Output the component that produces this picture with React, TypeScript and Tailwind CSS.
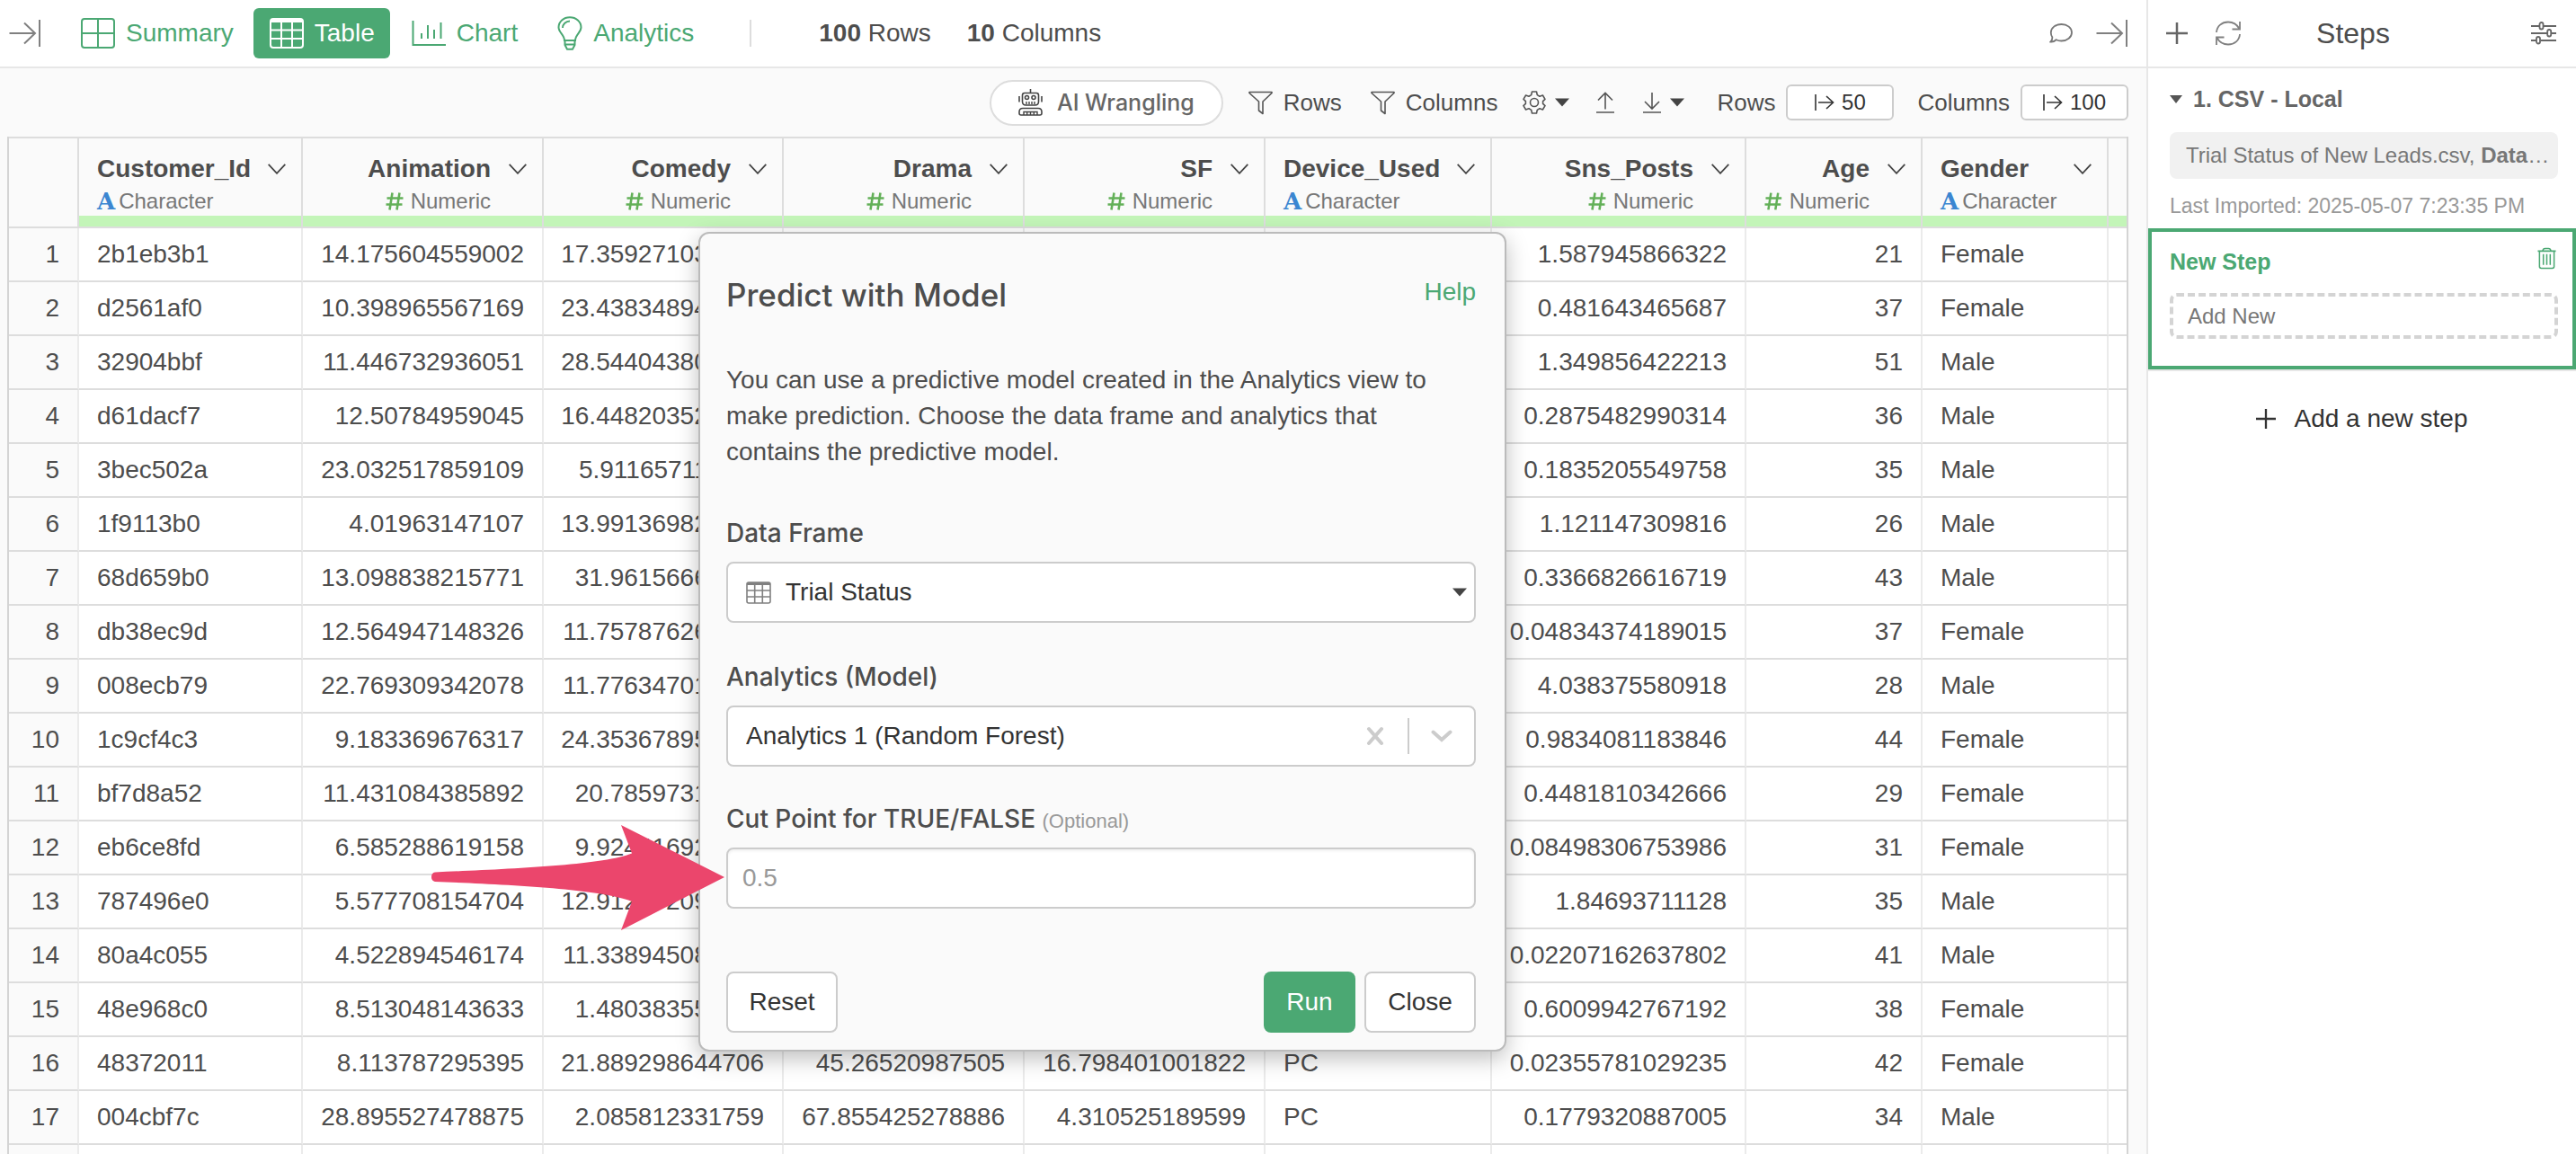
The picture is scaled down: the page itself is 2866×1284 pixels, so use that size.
import React from "react";

const F = "font-['Liberation_Sans',Arial,sans-serif]";

type Col = { name: string; kind: "num" | "chr"; w: string };

const cols: Col[] = [
  { name: "Customer_Id", kind: "chr", w: "w-[249px]" },
  { name: "Animation", kind: "num", w: "w-[268px]" },
  { name: "Comedy", kind: "num", w: "w-[267px]" },
  { name: "Drama", kind: "num", w: "w-[268px]" },
  { name: "SF", kind: "num", w: "w-[268px]" },
  { name: "Device_Used", kind: "chr", w: "w-[252px]" },
  { name: "Sns_Posts", kind: "num", w: "w-[283px]" },
  { name: "Age", kind: "num", w: "w-[196px]" },
  { name: "Gender", kind: "chr", w: "w-[207px]" },
];

const rows: string[][] = [
  ["2b1eb3b1", "14.175604559002", "17.359271030000", "", "", "", "1.587945866322", "21", "Female"],
  ["d2561af0", "10.398965567169", "23.438348940000", "", "", "", "0.481643465687", "37", "Female"],
  ["32904bbf", "11.446732936051", "28.544043800000", "", "", "", "1.349856422213", "51", "Male"],
  ["d61dacf7", "12.50784959045", "16.448203520000", "", "", "", "0.2875482990314", "36", "Male"],
  ["3bec502a", "23.032517859109", "5.911657110000", "", "", "", "0.1835205549758", "35", "Male"],
  ["1f9113b0", "4.01963147107", "13.991369820000", "", "", "", "1.121147309816", "26", "Male"],
  ["68d659b0", "13.098838215771", "31.96156660000", "", "", "", "0.3366826616719", "43", "Male"],
  ["db38ec9d", "12.564947148326", "11.757876260000", "", "", "", "0.04834374189015", "37", "Female"],
  ["008ecb79", "22.769309342078", "11.776347010000", "", "", "", "4.038375580918", "28", "Male"],
  ["1c9cf4c3", "9.183369676317", "24.353678950000", "", "", "", "0.9834081183846", "44", "Female"],
  ["bf7d8a52", "11.431084385892", "20.78597310000", "", "", "", "0.4481810342666", "29", "Female"],
  ["eb6ce8fd", "6.585288619158", "9.924416920000", "", "", "", "0.08498306753986", "31", "Female"],
  ["787496e0", "5.577708154704", "12.912772090000", "", "", "", "1.84693711128", "35", "Male"],
  ["80a4c055", "4.522894546174", "11.338945080000", "", "", "", "0.02207162637802", "41", "Male"],
  ["48e968c0", "8.513048143633", "1.480383550000", "", "", "", "0.6009942767192", "38", "Female"],
  ["48372011", "8.113787295395", "21.889298644706", "45.26520987505", "16.798401001822", "PC", "0.02355781029235", "42", "Female"],
  ["004cbf7c", "28.895527478875", "2.085812331759", "67.855425278886", "4.310525189599", "PC", "0.1779320887005", "34", "Male"],
  ["", "", "", "", "", "", "", "", ""],
];

const CollapseIcon = () => (
  <svg width="36" height="32" viewBox="0 0 36 32" fill="none" stroke="#808080" strokeWidth="2">
    <path d="M0.5 16H29M17 4.5L29 16L17 27.5M34 1V31" />
  </svg>
);

const SummaryIcon = () => (
  <svg width="38" height="34" viewBox="0 0 38 34" fill="none" stroke="#4ba873" strokeWidth="2">
    <rect x="1" y="1" width="36" height="32" rx="3" />
    <path d="M19 1V33M1 17H37" />
  </svg>
);

const TableIcon = () => (
  <svg width="38" height="34" viewBox="0 0 38 34" fill="none" stroke="#fff" strokeWidth="2">
    <rect x="1" y="1" width="36" height="32" rx="3" />
    <path d="M2 3H36" strokeWidth="4" />
    <path d="M13 3V33M25 3V33M1 13.5H37M1 23H37" />
  </svg>
);

const ChartIcon = () => (
  <svg width="38" height="30" viewBox="0 0 38 30" fill="none" stroke="#4ba873" strokeWidth="2">
    <path d="M1.5 1V28H38M11 21V15M18 21V6M25 21V11M32.5 21V3" />
  </svg>
);

const BulbIcon = () => (
  <svg width="28" height="38" viewBox="0 0 28 38" fill="none" stroke="#4ba873" strokeWidth="2">
    <path d="M8 27C8 21 1.500 18 1.500 12.500C1.500 6 7 1.200 14 1.200S26.500 6 26.500 12.500C26.500 18 20 21 20 27Z" />
    <path d="M8.500 27V32L11 36.800H17L19.500 32V27M8.500 31.500H19.500M6 13C6 9 9.500 5.500 14 5.500" />
  </svg>
);

const FunnelIcon = () => (
  <svg width="27" height="27" viewBox="0 0 27 27" fill="none" stroke="#555" strokeWidth="1.600" strokeLinejoin="round">
    <path d="M1 1.500H26V2.500L16 12V25.500L11.500 22V12L1 2.500Z" />
  </svg>
);

const GearIcon = () => (
  <svg width="26" height="26" viewBox="0 0 26 26" fill="none" stroke="#555" strokeWidth="1.600" strokeLinejoin="round">
    <path d="M10.500 1H15.500L16.300 4.600L19 6.200L22.400 5L25 9.300L22.600 11.600V14.400L25 16.700L22.400 21L19 19.800L16.300 21.400L15.500 25H10.500L9.700 21.400L7 19.800L3.600 21L1 16.700L3.400 14.400V11.600L1 9.300L3.600 5L7 6.200L9.700 4.600Z" />
    <circle cx="13" cy="13" r="4.500" />
  </svg>
);

const Caret = () => (
  <svg width="16" height="10" viewBox="0 0 16 10" fill="#444">
    <path d="M0 0.500H16L8 9.500Z" />
  </svg>
);

const UploadIcon = () => (
  <svg width="20" height="24" viewBox="0 0 20 24" fill="none" stroke="#555" strokeWidth="1.600">
    <path d="M10 19.500V1.500M2 9.500L10 1.500L18 9.500M0 23H20" />
  </svg>
);

const DownloadIcon = () => (
  <svg width="20" height="24" viewBox="0 0 20 24" fill="none" stroke="#555" strokeWidth="1.600">
    <path d="M10 1V19M2 11L10 19L18 11M0 23H20" />
  </svg>
);

const FromIcon = () => (
  <svg width="22" height="18" viewBox="0 0 22 18" fill="none" stroke="#333" strokeWidth="1.600">
    <path d="M1 0V18M4 9H20.500M13 2L20.500 9L13 16" />
  </svg>
);

const RobotIcon = () => (
  <svg width="27" height="30" viewBox="0 0 27 30" fill="none" stroke="#444" strokeWidth="1.600">
    <path d="M13.500 0V4M1 8V14.500M26 8V14.500M7 4.500H20Q22.500 4.500 22.500 7V14Q22.500 18 18.500 18H8.500Q4.500 18 4.500 14V7Q4.500 4.500 7 4.500Z" />
    <circle cx="9.500" cy="9.500" r="2" />
    <circle cx="17" cy="9.500" r="2" />
    <path d="M9 17V14M12 17V14M15 17V14M18 17V14" strokeWidth="1.400" />
    <path d="M5 21.500H22Q26 21.500 26 25.500V27Q26 29 24 29H3Q1 29 1 27V25.500Q1 21.500 5 21.500Z" />
    <path d="M6 29V25.500H21V29M9.700 25.500V29M13.500 25.500V29M17.300 25.500V29" strokeWidth="1.400" />
  </svg>
);

const ChevronIcon = () => (
  <svg width="20" height="12" viewBox="0 0 20 12" fill="none" stroke="#444" strokeWidth="1.800">
    <path d="M0.700 0.800L10 10.800L19.300 0.800" />
  </svg>
);

const CommentIcon = () => (
  <svg width="26" height="22" viewBox="0 0 26 22" fill="none" stroke="#777" strokeWidth="1.800">
    <path d="M13.500 1C20 1 25 5 25 10.200S20 19.500 13.500 19.500C11.300 19.500 9.400 19 7.700 18.200C6 20 3.800 20.700 1.500 20.500C3 19 3.500 17.500 3.300 15.200C2.200 13.800 1.800 12 1.800 10.200C1.800 5 7 1 13.500 1Z" />
  </svg>
);

const RefreshIcon = () => (
  <svg width="30" height="28" viewBox="0 0 30 28" fill="none" stroke="#808080" strokeWidth="1.800">
    <path d="M2 13C2.500 6 8 1.500 15 1.500C20.500 1.500 25 4.500 27.500 9M28 1V9.500H19.500M28 15C27.500 22 22 26.500 15 26.500C9.500 26.500 5 23.500 2.500 19M2 27V18.500H10.500" />
  </svg>
);

const SlidersIcon = () => (
  <svg width="28" height="26" viewBox="0 0 28 26" fill="none" stroke="#666" strokeWidth="1.800">
    <path d="M0 5H9.500M14 5H28M0 13H18M22.500 13H28M0 21H6M10.500 21H28" />
    <rect x="9.500" y="1" width="4" height="7.500" rx="2" />
    <rect x="18.200" y="9" width="4" height="7.500" rx="2" />
    <rect x="6" y="17" width="4" height="7.500" rx="2" />
  </svg>
);

const TrashIcon = () => (
  <svg width="21" height="25" viewBox="0 0 22 25" fill="none" stroke="#4ba873" strokeWidth="1.600">
    <path d="M0.500 4H21.500M6 4C6.500 2 8 1 9 1H13C14 1 15.500 2 16 4M2.500 4V22Q2.500 24 4.500 24H17.500Q19.500 24 19.500 22V4M7 7.500V20M11 7.500V20M15 7.500V20" />
  </svg>
);

const PlusIcon = ({ size, color }: { size: number; color: string }) => (
  <svg width={size} height={size} viewBox="0 0 24 24" fill="none" stroke={color} strokeWidth="2.500">
    <path d="M12 0V24M0 12H24" />
  </svg>
);

const GridIcon = () => (
  <svg width="28" height="25" viewBox="0 0 28 25" fill="none" stroke="#808080" strokeWidth="1.600">
    <rect x="1" y="1" width="26" height="23" rx="2" />
    <path d="M1 2.500H27" strokeWidth="3" />
    <path d="M9.700 3V24M18.300 3V24M1 10H27M1 17H27" />
  </svg>
);

const LetterMark = () => <b className="font-['DejaVu_Serif',serif] text-[26px] leading-6 text-[#3b86d1]">A</b>;
const HashMark = () => (
  <svg width="20" height="20" viewBox="0 0 20 20" fill="none" stroke="#63b058" strokeWidth="2.600">
    <path d="M7.500 0.500L4.500 19.500M15.500 0.500L12.500 19.500M1.500 6.500H19.500M0.500 13.500H18.500" />
  </svg>
);

function TopBar() {
  return (
    <header className="flex h-[76px] shrink-0 items-center border-b-2 border-[#e7e7e7] bg-white pr-5 pl-2.5 text-[28px] leading-8 text-[#4ba873]">
      <button aria-label="Expand left panel"><CollapseIcon /></button>
      <nav className="ml-[26px] flex items-center">
        <button className="flex h-14 items-center gap-3 px-[18px]"><SummaryIcon />Summary</button>
        <button className="ml-1 flex h-14 items-center gap-3 rounded-md bg-[#4ba873] pr-[17px] pl-[18px] text-white"><TableIcon />Table</button>
        <button className="ml-1.5 flex h-14 items-center gap-3 px-[18px]"><ChartIcon />Chart</button>
        <button className="ml-2 flex h-14 items-center gap-3 px-[18px]"><BulbIcon />Analytics</button>
      </nav>
      <div className="ml-11 h-[30px] w-0.5 bg-[#ddd]" />
      <p className="ml-[75px] text-[#4d4d4d]"><b>100</b> Rows</p>
      <p className="ml-10 text-[#4d4d4d]"><b>10</b> Columns</p>
      <div className="ml-auto flex items-center gap-[26px]">
        <button aria-label="Comments"><CommentIcon /></button>
        <button aria-label="Collapse steps"><CollapseIcon /></button>
      </div>
    </header>
  );
}

function ToolBar() {
  return (
    <div className="flex h-[76px] shrink-0 items-center justify-end pr-5 text-[26px] leading-8 text-[#4d4d4d]">
      <button className="flex h-[51px] items-center gap-4 rounded-full border-2 border-[#ddd] bg-white px-[30px] font-['Inter',sans-serif] text-[25px] font-medium text-[#666]">
        <RobotIcon />AI Wrangling
      </button>
      <button className="ml-7 flex items-center gap-3"><FunnelIcon />Rows</button>
      <button className="ml-8 flex items-center gap-3"><FunnelIcon />Columns</button>
      <button className="ml-7 flex items-center gap-2.5" aria-label="Settings"><GearIcon /><Caret /></button>
      <button className="ml-[30px]" aria-label="Export"><UploadIcon /></button>
      <button className="ml-8 flex items-center gap-2.5" aria-label="Download"><DownloadIcon /><Caret /></button>
      <span className="ml-9">Rows</span>
      <button className="ml-3 flex h-10 w-[120px] items-center justify-center gap-2 rounded-md border-2 border-[#ccc] bg-white text-2xl text-[#333]"><FromIcon />50</button>
      <span className="ml-[26px]">Columns</span>
      <button className="ml-3 flex h-10 w-[120px] items-center justify-center gap-2 rounded-md border-2 border-[#ccc] bg-white text-2xl text-[#333]"><FromIcon />100</button>
    </div>
  );
}

function HeadCell({ col }: { col: Col }) {
  const num = col.kind === "num";
  return (
    <th className="h-[102px] border-t-2 border-r-2 border-b-2 border-[#ddd] p-0 align-top font-normal">
      <div className="flex h-[98px] flex-col border-b-[12px] border-[#c3f5b8] pt-[18px] pr-[17px] pl-5">
        <div className={num ? "flex items-center justify-end gap-5" : "flex items-center justify-between"}>
          <b>{col.name}</b>
          <button aria-label={"Menu for " + col.name}><ChevronIcon /></button>
        </div>
        <div className={num ? "mt-1 flex items-center justify-end gap-2 pr-10 text-2xl text-[#777]" : "mt-1 flex h-8 items-center gap-1 text-2xl text-[#777]"}>
          {num ? <HashMark /> : <LetterMark />}
          {num ? "Numeric" : "Character"}
        </div>
      </div>
    </th>
  );
}

function DataTable() {
  return (
    <div className="min-h-0 flex-1 overflow-hidden pr-5 pl-2">
      <table className="w-full table-fixed border-separate border-spacing-0 border-r-2 border-l-2 border-[#d4d4d4] text-[28px] leading-8 text-[#4d4d4d]">
        <colgroup>
          <col className="w-[78px]" />
          {cols.map((c) => <col key={c.name} className={c.w} />)}
          <col />
        </colgroup>
        <thead>
          <tr>
            <th className="border-t-2 border-r-2 border-b-2 border-[#ddd]" />
            {cols.map((c) => <HeadCell key={c.name} col={c} />)}
            <th className="border-t-2 border-b-2 border-[#ddd] p-0 align-bottom"><div className="h-3 bg-[#c3f5b8]" /></th>
          </tr>
        </thead>
        <tbody>
          {rows.map((r, i) => (
            <tr key={i}>
              <td className="h-[60px] border-r-2 border-b-2 border-r-[#ebebeb] border-b-[#ddd] bg-[#fafafa] pr-5 text-right">{r[0] && i + 1}</td>
              {r.map((v, j) => (
                <td
                  key={j}
                  className={
                    cols[j].kind === "num"
                      ? "border-r-2 border-b-2 border-r-[#ebebeb] border-b-[#ddd] bg-white pr-5 text-right whitespace-nowrap"
                      : "border-r-2 border-b-2 border-r-[#ebebeb] border-b-[#ddd] bg-white pl-5"
                  }
                >
                  {v}
                </td>
              ))}
              <td className="border-b-2 border-[#ddd] bg-white" />
            </tr>
          ))}
        </tbody>
      </table>
    </div>
  );
}

function StepsPanel() {
  return (
    <aside className="w-[478px] shrink-0 border-l-2 border-[#e7e7e7] bg-white text-2xl text-[#777]">
      <div className="flex h-[76px] items-center border-b-2 border-[#e7e7e7] pr-[22px] pl-5">
        <button aria-label="Add step"><PlusIcon size={24} color="#666" /></button>
        <button className="ml-[30px]" aria-label="Refresh"><RefreshIcon /></button>
        <h2 className="flex-1 pr-[74px] text-center text-[32px] leading-10 text-[#4d4d4d]">Steps</h2>
        <button aria-label="Step options"><SlidersIcon /></button>
      </div>
      <section className="pr-5 pl-6">
        <h3 className="flex items-center gap-3 pt-[18px] text-[25px] leading-8 font-bold text-[#666]"><svg width="14" height="9" viewBox="0 0 14 9" fill="#555"><path d="M0 0H14L7 9Z" /></svg>1. CSV - Local</h3>
        <p className="mt-[21px] h-[52px] truncate rounded-lg bg-[#f1f1f1] pr-2 pl-[18px] leading-[52px]">Trial Status of New Leads.csv, <b>Data Frame</b></p>
        <p className="mt-3.5 text-[23px] leading-8 text-[#999]">Last Imported: 2025-05-07 7:23:35 PM</p>
      </section>
      <section className="mt-[9px] h-[157px] border-4 border-[#4ba873] pt-[17px] pr-4 pl-5">
        <h3 className="flex items-start justify-between text-[25px] leading-8 font-bold text-[#4ba873]">New Step<button className="mr-0.5" aria-label="Delete step"><TrashIcon /></button></h3>
        <button className="mt-[19px] block h-[51px] w-full rounded-lg border-4 border-dashed border-[#d4d4d4] pl-4 text-left">Add New</button>
      </section>
      <button className="flex w-full items-center justify-center gap-5 border-t-2 border-[#e7e7e7] pt-[35px] text-[28px] leading-9 text-[#333]"><PlusIcon size={22} color="#333" />Add a new step</button>
    </aside>
  );
}

function PredictDialog() {
  return (
    <div role="dialog" aria-label="Predict with Model" className="absolute top-[258px] left-[777px] w-[899px] rounded-xl border-2 border-[#bbb] bg-[#fafafa] pt-[46px] pr-8 pb-[19px] pl-[29px] text-[28px] leading-8 text-[#4d4d4d] shadow-[0_8px_24px_rgba(0,0,0,0.25)]">
      <div className="flex items-start justify-between">
        <h1 className="font-['Inter',sans-serif] text-[35px] leading-[44px] font-medium">Predict with Model</h1>
        <a href="#help" className="pt-[3px] text-[#4ba873]">Help</a>
      </div>
      <p className="mt-[53px] max-w-[810px] leading-10">You can use a predictive model created in the Analytics view to make prediction. Choose the data frame and analytics that contains the predictive model.</p>
      <label htmlFor="frame" className="mt-[54px] block h-8 font-['Inter',sans-serif] font-medium">Data Frame</label>
      <div className="relative mt-4 flex items-center">
        <select id="frame" className="h-[68px] w-full appearance-none rounded-lg border-2 border-[#ccc] bg-white pl-[64px] text-[#333]"><option>Trial Status</option></select>
        <span className="pointer-events-none absolute left-[22px]"><GridIcon /></span>
        <span className="pointer-events-none absolute right-2.5"><Caret /></span>
      </div>
      <label htmlFor="model" className="mt-11 block h-8 font-['Inter',sans-serif] font-medium">Analytics (Model)</label>
      <div className="relative mt-4 flex items-center">
        <select id="model" className="h-[68px] w-full appearance-none rounded-lg border-2 border-[#ccc] bg-white pl-5 text-[#333]"><option>Analytics 1 (Random Forest)</option></select>
        <span className="absolute right-[26px] flex items-center gap-6">
          <button className="mr-0.5" aria-label="Clear"><svg width="20" height="22" viewBox="0 0 20 22" fill="none" stroke="#ccc" strokeWidth="4" strokeLinecap="round"><path d="M3 3L17 19M17 3L3 19" /></svg></button>
          <span className="h-10 w-0.5 bg-[#ccc]" />
          <svg width="24" height="14" viewBox="0 0 24 14" fill="none" stroke="#ccc" strokeWidth="4" strokeLinecap="round"><path d="M2.500 2.500L12 11L21.500 2.500" /></svg>
        </span>
      </div>
      <label htmlFor="cut" className="mt-[42px] block h-8 font-['Inter',sans-serif] font-medium">Cut Point for TRUE/FALSE <span className="font-['Liberation_Sans',Arial,sans-serif] text-[22px] font-normal text-[#999]">(Optional)</span></label>
      <input id="cut" placeholder="0.5" className="mt-4 block h-[68px] w-full rounded-lg border-2 border-[#ccc] bg-white px-4 inset-shadow-[0_2px_3px_rgba(0,0,0,0.06)] placeholder:text-[#999]" />
      <div className="mt-[70px] flex gap-2.5 text-[#333]">
        <button className="mr-auto h-[68px] w-[124px] rounded-lg border-2 border-[#ccc] bg-white">Reset</button>
        <button className="h-[68px] w-[102px] rounded-lg bg-[#4ba873] text-white">Run</button>
        <button className="h-[68px] w-[124px] rounded-lg border-2 border-[#ccc] bg-white">Close</button>
      </div>
    </div>
  );
}

const PointerArrow = () => (
  <svg className="absolute top-[918px] left-[480px]" width="327" height="117" viewBox="0 0 327 117" fill="#eb466c">
    <path d="M4 52.500C80 49 190 45 223 31.500L211 0L326 58L211 117L223 85C190 71 80 66 4 63Q0 62 0 58Q0 53 4 52.500Z" />
  </svg>
);

export default function App() {
  return (
    <div className={"relative flex h-screen overflow-hidden bg-[#fafafa] " + F}>
      <main className="flex min-w-0 flex-1 flex-col">
        <TopBar />
        <ToolBar />
        <DataTable />
      </main>
      <StepsPanel />
      <PredictDialog />
      <PointerArrow />
    </div>
  );
}
